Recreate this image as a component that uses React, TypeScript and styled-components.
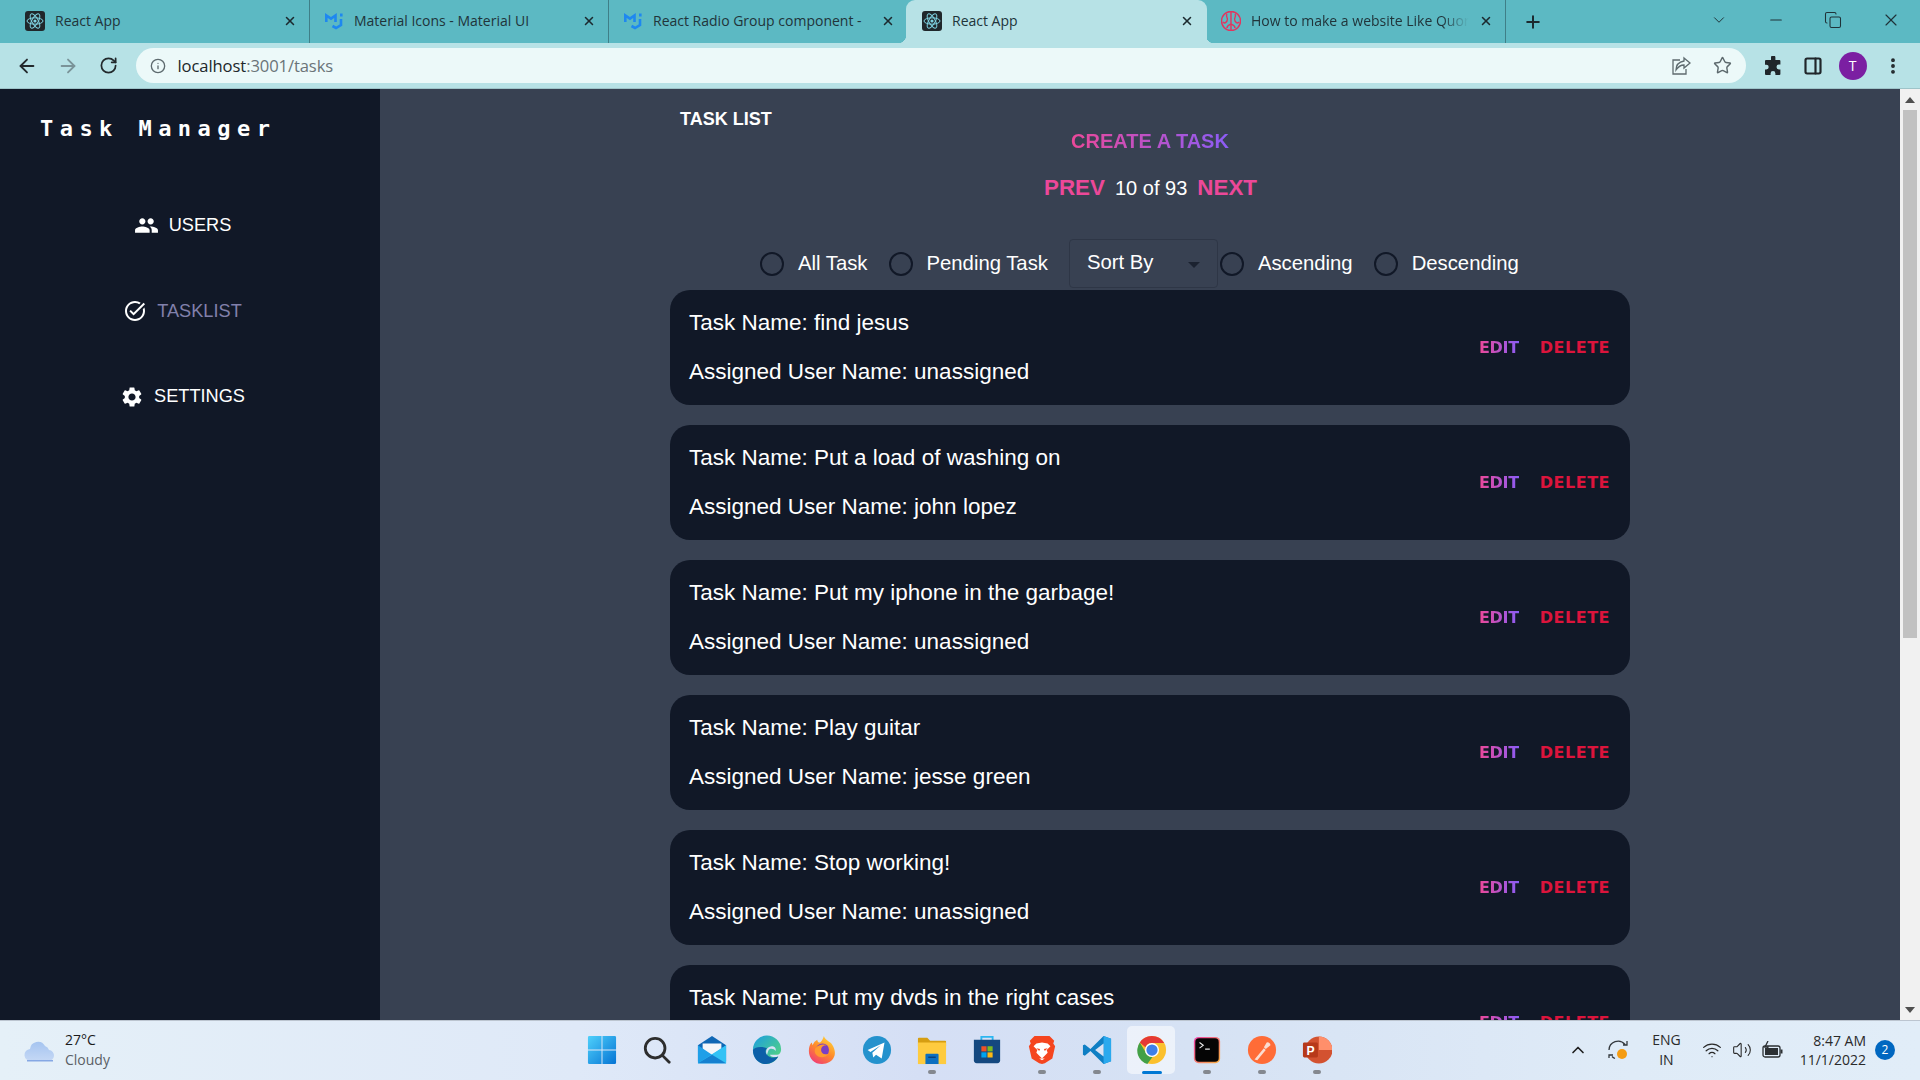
import styled, { createGlobalStyle } from 'styled-components';
import { MdPeople, MdSettings, MdTaskAlt } from 'react-icons/md';
import {
  ArrowLeft,
  ArrowRight,
  ChevronDown,
  ChevronUp,
  Copy,
  EllipsisVertical,
  Info,
  Minus,
  PanelRight,
  Plus,
  RotateCw,
  Star,
  Volume2,
  Wifi,
  X,
} from 'lucide-react';

const GlobalStyle = createGlobalStyle`
  html, body, #root {
    margin: 0;
    height: 100%;
  }

  body {
    overflow: hidden;
    font-family: "Liberation Sans", Arial, sans-serif;
  }

  * {
    box-sizing: border-box;
  }
`;

const Screen = styled.div`
  display: flex;
  flex-direction: column;
  width: 1920px;
  height: 1080px;
`;

/* browser chrome */

const TabStrip = styled.div`
  display: flex;
  align-items: stretch;
  flex: 0 0 43px;
  padding-left: 11px;
  background-color: #5cb9c3;
  font-family: "Open Sans", sans-serif;
  font-size: 14px;
`;

const Tab = styled.div<{ $active?: boolean; $plain?: boolean }>`
  position: relative;
  display: flex;
  align-items: center;
  width: ${({ $active }) => ($active ? '301px' : '299px')};
  margin-left: ${({ $active }) => ($active ? '-2px' : '0')};
  padding: 0 12px 2px ${({ $active }) => ($active ? '16px' : '14px')};
  color: #21343a;
  background-color: ${({ $active }) => ($active ? '#b7e2e6' : 'transparent')};
  border-radius: ${({ $active }) => ($active ? '9px 9px 0 0' : '0')};
  border-right: 1px solid ${({ $active, $plain }) => ($active || $plain ? 'transparent' : '#3f7f88')};

  ${({ $active }) =>
    $active
      ? `
    &::before, &::after {
      content: '';
      position: absolute;
      bottom: 0;
      width: 8px;
      height: 8px;
    }
    &::before {
      left: -8px;
      background: radial-gradient(circle at 0 0, transparent 8px, #b7e2e6 8.5px);
    }
    &::after {
      right: -8px;
      background: radial-gradient(circle at 100% 0, transparent 8px, #b7e2e6 8.5px);
    }
  `
      : ''}
`;

const Favicon = styled.svg`
  flex: 0 0 20px;
  width: 20px;
  height: 20px;
`;

const TabTitle = styled.span<{ $fade?: boolean }>`
  flex: 1;
  margin-left: 10px;
  overflow: hidden;
  white-space: nowrap;
  ${({ $fade }) =>
    $fade ? 'mask-image: linear-gradient(to right, #000 86%, transparent 98%);' : ''}
`;

const TabClose = styled(X)`
  flex: 0 0 14px;
  margin-left: 6px;
  color: #1c2a2f;
`;

const NewTab = styled(Plus)`
  margin: 12px 0 0 17px;
  color: #1c2a2f;
`;

const WindowButtons = styled.div`
  display: flex;
  align-items: center;
  margin-left: auto;
  padding: 0 19px 4px 0;
  gap: 39px;
  color: #1f3238;
`;

const Toolbar = styled.div`
  display: flex;
  align-items: center;
  flex: 0 0 46px;
  padding: 0 0 0 15px;
  background-color: #b7e2e6;
  border-bottom: 1px solid #9ec4c9;
`;

const NavButton = styled.span<{ $muted?: boolean }>`
  display: flex;
  justify-content: center;
  width: 24px;
  margin-right: 16.5px;
  color: ${({ $muted }) => ($muted ? '#7a9398' : '#22292c')};
`;

const AddressBar = styled.div`
  display: flex;
  align-items: center;
  width: 1610px;
  height: 35px;
  margin-left: -1px;
  padding: 0 14px 0 14px;
  border-radius: 18px;
  background-color: #ecf9f9;
  color: #5d6a6e;
`;

const Url = styled.span`
  margin-left: 12px;
  font-family: "Open Sans", sans-serif;
  font-size: 16.6px;
  letter-spacing: -0.1px;
  color: #6a7478;

  b {
    font-weight: 400;
    color: #20272a;
  }
`;

const BarIcons = styled.div`
  display: flex;
  align-items: center;
  gap: 22px;
  margin-left: auto;
`;

const ToolIcons = styled.div`
  display: flex;
  align-items: center;
  gap: 16px;
  margin-left: 17px;
  color: #20262a;
`;

const PanelIcon = styled(PanelRight)`
  margin-left: 4px;
`;

const Avatar = styled.span`
  display: flex;
  align-items: center;
  justify-content: center;
  width: 28px;
  height: 28px;
  border-radius: 50%;
  background-color: #7b1fa2;
  color: #fff;
  font-family: "Open Sans", sans-serif;
  font-size: 14px;
`;

/* page */

const Viewport = styled.div`
  display: flex;
  flex: 1;
  min-height: 0;
`;

const Sidebar = styled.aside`
  display: flex;
  flex-direction: column;
  flex: 0 0 380px;
  padding-top: 26px;
  background-color: #111827;
  color: #fff;
`;

const Brand = styled.h1`
  margin: 0 0 0 40px;
  font-family: "DejaVu Sans Mono", monospace;
  font-size: 22px;
  line-height: 28px;
  font-weight: 700;
  letter-spacing: 6.45px;
  white-space: nowrap;
`;

const SideNav = styled.nav`
  display: flex;
  flex-direction: column;
  align-items: center;
  gap: 64.5px;
  width: 365px;
  margin-top: 72px;
`;

const SideLink = styled.a<{ $current?: boolean }>`
  display: flex;
  align-items: center;
  gap: 10px;
  height: 21px;
  font-size: 18.2px;
  color: ${({ $current }) => ($current ? '#8180ab' : '#fff')};

  svg {
    color: #fff;
  }
`;

const Main = styled.main`
  flex: 1;
  min-width: 0;
  overflow: hidden;
  padding: 19px 0 0 290px;
  background-color: #384152;
`;

const Column = styled.div`
  display: flex;
  flex-direction: column;
  width: 960px;
`;

const PageTitle = styled.h2`
  margin: 0 0 0 10px;
  font-size: 18px;
  line-height: 22px;
  font-weight: 700;
  color: #fff;
`;

const GradientText = styled.span`
  background: linear-gradient(to right, #ec4899, #8b5cf6);
  background-clip: text;
  -webkit-background-clip: text;
  color: transparent;
`;

const CreateLink = styled(GradientText)`
  align-self: center;
  font-size: 20px;
  line-height: 22px;
  font-weight: 700;
`;

const Pager = styled.div`
  display: flex;
  align-items: center;
  justify-content: center;
  gap: 10px;
  height: 28px;
  margin-top: 22px;
  padding-left: 1px;
  font-size: 20px;
  color: #fff;
`;

const PagerLink = styled.a`
  font-size: 22.4px;
  font-weight: 700;
  color: #ec4899;
`;

const Filters = styled.div`
  display: flex;
  align-items: center;
  height: 49px;
  margin-top: 37px;
  padding-left: 90px;
  font-size: 20.3px;
  color: #fff;
`;

const Option = styled.label`
  display: flex;
  align-items: center;
  gap: 14px;
  margin-right: 21px;
  white-space: nowrap;
`;

const Radio = styled.span`
  width: 24px;
  height: 24px;
  border: 2.5px solid #111827;
  border-radius: 50%;
`;

const SortSelect = styled.div`
  position: relative;
  display: flex;
  align-items: center;
  width: 149px;
  height: 49px;
  margin: 0 2px 0 0;
  padding: 0 0 3px 17px;
  border: 1px solid #2e3646;
  border-radius: 4px;

  &::after {
    content: '';
    position: absolute;
    top: 22px;
    right: 17px;
    border: 6px solid transparent;
    border-top-color: #1b2230;
    border-bottom-width: 0;
  }
`;

const TaskList = styled.div`
  display: flex;
  flex-direction: column;
  gap: 20px;
  margin-top: 2px;
`;

const TaskCard = styled.article`
  display: flex;
  align-items: center;
  justify-content: space-between;
  flex: 0 0 115px;
  padding: 0 20px 0 19px;
  border-radius: 20px;
  background-color: #111827;
`;

const TaskLines = styled.div`
  display: flex;
  flex-direction: column;
  gap: 24px;
  margin-top: -2px;
  font-size: 22.5px;
  line-height: 25px;
  color: #fff;
`;

const TaskActions = styled.div`
  display: flex;
  gap: 21px;
  font-family: "DejaVu Sans", sans-serif;
  font-size: 16px;
  font-weight: 700;
`;

const EditLink = styled(GradientText)`
  letter-spacing: -0.3px;
`;

const DeleteLink = styled.a`
  letter-spacing: 0.5px;
  color: #dc143c;
`;

const Scrollbar = styled.div`
  display: flex;
  flex-direction: column;
  align-items: center;
  flex: 0 0 20px;
  padding: 0 3px;
  background-color: #f1f1f1;
`;

const ScrollArrow = styled.span<{ $down?: boolean }>`
  width: 0;
  height: 0;
  margin: ${({ $down }) => ($down ? 'auto 0 7px' : '8px 0 0')};
  border-left: 5px solid transparent;
  border-right: 5px solid transparent;
  border-${({ $down }) => ($down ? 'top' : 'bottom')}: 6px solid #505050;
`;

const ScrollThumb = styled.div`
  width: 14px;
  height: 528px;
  margin-top: 7px;
  background-color: #c1c1c1;
`;

/* taskbar */

const Taskbar = styled.footer`
  display: grid;
  grid-template-columns: 574px auto 1fr;
  align-items: center;
  flex: 0 0 60px;
  padding-bottom: 2px;
  border-top: 1px solid #bcc5d0;
  background: linear-gradient(to right, #e5f0f8 0%, #dfe9f8 30%, #d5dff5 48%, #d6e2f4 62%, #dfebf7 85%, #e1edf8 100%);
  font-family: "Open Sans", sans-serif;
  color: #1b1b1b;
`;

const Weather = styled.div`
  display: flex;
  align-items: center;
  gap: 9px;
  padding-left: 24px;
  font-size: 14px;
  line-height: 20px;
`;

const Muted = styled.div`
  color: #5b5f66;
`;

const AppStrip = styled.div`
  display: flex;
`;

const AppCell = styled.div<{ $active?: boolean }>`
  position: relative;
  display: flex;
  align-items: center;
  justify-content: center;
  width: 55px;
  height: 48px;

  &::before {
    content: '';
    position: absolute;
    left: 3px;
    right: 4px;
    top: 0;
    bottom: 0;
    border-radius: 5px;
    background-color: ${({ $active }) => ($active ? 'rgba(255,255,255,0.55)' : 'transparent')};
  }

  svg {
    position: relative;
    width: 30px;
    height: 30px;
  }
`;

const RunDot = styled.span<{ $active?: boolean }>`
  position: absolute;
  left: 50%;
  bottom: 0;
  width: ${({ $active }) => ($active ? '20px' : '8px')};
  height: ${({ $active }) => ($active ? '3px' : '4px')};
  transform: translateX(-50%);
  border-radius: 2px;
  background-color: ${({ $active }) => ($active ? '#0078d4' : '#84888f')};
`;

const Tray = styled.div`
  display: flex;
  align-items: center;
  justify-content: flex-end;
  padding-right: 25px;
  font-size: 14px;
  color: #2a2a2a;
`;

const TrayArrow = styled(ChevronUp)`
  margin-right: 18px;
  color: #1f1f1f;
`;

const Lang = styled.div`
  margin: 0 21px 0 22px;
  line-height: 20px;
  text-align: center;
`;

const TrayIcons = styled.div`
  display: flex;
  align-items: center;
  gap: 10px;
`;

const Clock = styled.div`
  margin: 0 9px 0 16px;
  line-height: 19px;
  text-align: right;
`;

const Badge = styled.span`
  display: flex;
  align-items: center;
  justify-content: center;
  width: 20px;
  height: 20px;
  border-radius: 50%;
  background-color: #0067c0;
  color: #fff;
  font-size: 12px;
`;

const ReactMark = () => (
  <Favicon viewBox="0 0 20 20">
    <rect width="20" height="20" rx="3" fill="#20272b" />
    <g fill="none" stroke="#7fd3e2" strokeWidth="1">
      <ellipse cx="10" cy="10" rx="8" ry="3.2" />
      <ellipse cx="10" cy="10" rx="8" ry="3.2" transform="rotate(60 10 10)" />
      <ellipse cx="10" cy="10" rx="8" ry="3.2" transform="rotate(120 10 10)" />
    </g>
    <circle cx="10" cy="10" r="1.6" fill="#7fd3e2" />
  </Favicon>
);

const MuiMark = () => (
  <Favicon viewBox="0 0 20 20" fill="none" stroke="#1e88f0" strokeWidth="2.6">
    <path d="M2.300 11V4.500L7 7.600l4.500-3.100V11" />
    <path d="M8.500 15l3.500 2 5-3V8" />
    <path d="M17.300 2.500v3" />
  </Favicon>
);

const BrainMark = () => (
  <Favicon viewBox="0 0 20 20">
    <circle cx="10" cy="10" r="9.500" fill="none" stroke="#e2345e" strokeWidth="1.500" />
    <path
      d="M10 1v18M6 3c-2 3 2 4 0 7s-3 2-4 1M14 3c2 3-2 4 0 7s3 2 4 1M6 17c0-3 2-3 4-4M14 17c0-3-2-3-4-4"
      fill="none"
      stroke="#e2345e"
      strokeWidth="1.400"
    />
  </Favicon>
);

const WindowsIcon = () => (
  <svg viewBox="0 0 32 32">
    <defs>
      <linearGradient id="win" x1="0" y1="0" x2="1" y2="1">
        <stop offset="0" stopColor="#4fd0fb" />
        <stop offset="1" stopColor="#0574d4" />
      </linearGradient>
    </defs>
    <path d="M1 2.500A1.500 1.500 0 012.500 1H15.500V15.500H1zM16.500 1H29.500A1.500 1.500 0 0131 2.500V15.500H16.500zM1 16.500H15.500V31H2.500A1.500 1.500 0 011 29.500zM16.500 16.500H31V29.500A1.500 1.500 0 0129.500 31H16.500z" fill="url(#win)" />
  </svg>
);

const SearchIcon = () => (
  <svg viewBox="0 0 32 32" fill="none" stroke="#2d2d2d" strokeWidth="3" strokeLinecap="round">
    <circle cx="14" cy="14" r="10.500" />
    <path d="M22 22l7 7" />
  </svg>
);

const MailIcon = () => (
  <svg viewBox="0 0 32 32">
    <path d="M1 11L16 1l15 10v17H1z" fill="#0f67b5" />
    <path d="M6 9h20v8l-10 6-10-6z" fill="#f3f6fa" />
    <path d="M1 11l15 10 15-10v19H1z" fill="#1f9fe8" />
    <path d="M31 11v19H1z" fill="#33c2f5" />
    <path d="M1 30l15-9 15 9z" fill="#1580d0" />
  </svg>
);

const EdgeIcon = () => (
  <svg viewBox="0 0 32 32">
    <defs>
      <linearGradient id="edgeTop" x1="0" y1="0" x2="1" y2="1">
        <stop offset="0" stopColor="#1b9de2" />
        <stop offset="1" stopColor="#5bdc72" />
      </linearGradient>
    </defs>
    <path d="M1 16A15 15 0 0131 15c0 3-1 6-4 6h-8c2 3 6 3 9 2-3 6-9 8-13 8C7 31 1 24 1 16z" fill="url(#edgeTop)" />
    <path d="M1 16C1 26 8 31 15 31c5 0 10-3 13-8-5 2-10 1-12-2-2-2-2-5 0-7-5-2-13-2-15 2z" fill="#0c5fa8" />
    <path d="M16 21c-2-3-1-8 5-9 4 0 5 3 4 5-1-2-4-3-6-2-2 1-2 4-3 6z" fill="#d8e1f5" />
  </svg>
);

const FirefoxIcon = () => (
  <svg viewBox="0 0 32 32">
    <defs>
      <linearGradient id="fox" x1="0.800" y1="0" x2="0.200" y2="1">
        <stop offset="0" stopColor="#ffd83a" />
        <stop offset="0.500" stopColor="#ff8a2a" />
        <stop offset="1" stopColor="#f0387a" />
      </linearGradient>
    </defs>
    <path d="M18 1c1 4 5 5 8 8 3 4 5 10 3 14-2 5-7 8-13 8C8 31 2 25 2 17c0-4 1-7 3-9l1 3c1-3 3-5 5-6 0 2 1 3 3 3 2-2 3-4 4-7z" fill="url(#fox)" />
    <circle cx="16.500" cy="16" r="7" fill="#7b3fc4" />
    <path d="M9 14c3-4 9-5 12-3-4 0-6 2-6 5s3 6 8 4c-3 5-11 5-14 0-1-2-1-4 0-6z" fill="#ff9a2e" />
  </svg>
);

const TelegramIcon = () => (
  <svg viewBox="0 0 32 32">
    <circle cx="16" cy="16" r="15" fill="#2492cd" />
    <path d="M6 16l18-8-3 17-6-4-3 3-1-5 9-8-11 7z" fill="#fff" />
  </svg>
);

const FilesIcon = () => (
  <svg viewBox="0 0 32 32">
    <path d="M1 4a1 1 0 011-1h9l3 3h16a1 1 0 011 1v5H1z" fill="#d69e12" />
    <path d="M1 8h30v23H1z" fill="#fecb3f" />
    <path d="M9 21a1 1 0 011-1h12a1 1 0 011 1v10H9z" fill="#0c6fc1" />
    <path d="M12 23h8v1.500h-8z" fill="#0a3f78" />
  </svg>
);

const StoreIcon = () => (
  <svg viewBox="0 0 32 32">
    <path d="M10 6V2h12v4" fill="none" stroke="#2db6f0" strokeWidth="2" />
    <path d="M2 5h28v22a3 3 0 01-3 3H5a3 3 0 01-3-3z" fill="#14487f" />
    <path d="M10 12h5.500v5.500H10z" fill="#f05225" />
    <path d="M16.500 12H22v5.500h-5.500z" fill="#7dba1f" />
    <path d="M10 18.500h5.500V24H10z" fill="#00a4ef" />
    <path d="M16.500 18.500H22V24h-5.500z" fill="#fdb813" />
  </svg>
);

const BraveIcon = () => (
  <svg viewBox="0 0 32 32">
    <path d="M8 1h16l5 5-1 3 2 3-3 13-8 5-3 1-3-1-8-5-3-13 2-3-1-3z" fill="#f5451f" />
    <path d="M10 9l6-1 6 1 3 3-4 4 1 3-6 6-6-6 1-3-4-4zM13 25h6l-3 2z" fill="#fff" />
    <path d="M10 14l4 1-1 2zM22 14l-4 1 1 2z" fill="#f5451f" />
  </svg>
);

const VsCodeIcon = () => (
  <svg viewBox="0 0 32 32">
    <path d="M23 1L9 15 3 10 1 11v10l2 1 6-5 14 14 8-3V4z" fill="#0f7fc4" />
    <path d="M23 1l8 3v24l-8 3z" fill="#2aa9ee" />
    <path d="M23 9v14l-9-7z" fill="#d9e3f5" />
  </svg>
);

const ChromeIcon = () => (
  <svg viewBox="0 0 32 32">
    <circle cx="16" cy="16" r="15" fill="#fbc02d" />
    <path d="M16 1a15 15 0 0113 7.500H16a7.500 7.500 0 00-7 4.500L3 8a15 15 0 0113-7z" fill="#e53935" />
    <path d="M3 8l6.500 11a7.500 7.500 0 007 4.500L11 31A15 15 0 013 8z" fill="#43a047" />
    <circle cx="16" cy="16" r="7.500" fill="#fff" />
    <circle cx="16" cy="16" r="6" fill="#3f7fe8" />
  </svg>
);

const TerminalIcon = () => (
  <svg viewBox="0 0 32 32">
    <defs>
      <linearGradient id="term" x1="0" y1="0" x2="1" y2="1">
        <stop offset="0" stopColor="#f040a8" />
        <stop offset="1" stopColor="#f8b040" />
      </linearGradient>
    </defs>
    <rect x="2" y="2" width="28" height="28" rx="5" fill="url(#term)" />
    <rect x="3.500" y="3.500" width="25" height="25" rx="4" fill="#050505" />
    <path d="M8 8l4 3-4 3M14 15h5" fill="none" stroke="#e8e8e8" strokeWidth="1.200" />
  </svg>
);

const PostmanIcon = () => (
  <svg viewBox="0 0 32 32">
    <circle cx="16" cy="16" r="15" fill="#ff6c37" />
    <path d="M8 26l10-12 2 2L11 27zM18 13l3-5a3 3 0 014 3l-5 4z" fill="#fbdcd0" />
  </svg>
);

const PowerPointIcon = () => (
  <svg viewBox="0 0 32 32">
    <circle cx="18" cy="16" r="14.500" fill="#d35230" />
    <path d="M18 1.500A14.500 14.500 0 0132.500 16H18z" fill="#ff8f6b" />
    <rect x="1" y="8" width="16" height="16" rx="1.500" fill="#b7391a" />
    <text x="9" y="21" textAnchor="middle" fontFamily="'Liberation Sans', sans-serif" fontWeight="700" fontSize="13" fill="#fff">
      P
    </text>
  </svg>
);

const CloudIcon = () => (
  <svg width="32" height="24" viewBox="0 0 32 24">
    <defs>
      <linearGradient id="cloud" x1="0" y1="0" x2="0" y2="1">
        <stop offset="0" stopColor="#a5c4f0" />
        <stop offset="1" stopColor="#c5d8f5" />
      </linearGradient>
    </defs>
    <path d="M7 23a6 6 0 01-1-12 8 8 0 0115-3 6 6 0 014 4 5.500 5.500 0 01-1 11z" fill="url(#cloud)" />
    <path d="M3 22h26v1.500H3z" fill="#86a8e4" />
  </svg>
);

const ShareIcon = () => (
  <svg width="20" height="20" viewBox="0 0 20 20" fill="none" stroke="#5d6a6e" strokeWidth="1.300">
    <path d="M9 4H2v14h13v-5" />
    <path d="M13 2l6 5-6 5V9c-4 0-6 2-8 5 0-5 3-8 8-9z" />
  </svg>
);

const PuzzleIcon = () => (
  <svg width="20" height="20" viewBox="0 0 20 20" fill="#20262a">
    <path d="M8 1.500a2.200 2.200 0 014.400 0V4h4a1 1 0 011 1v3.600h-1.500a2.400 2.400 0 000 4.800h1.500V18a1 1 0 01-1 1h-4v-1.500a2.400 2.400 0 00-4.800 0V19H3a1 1 0 01-1-1v-4.500h1.300a2.400 2.400 0 000-4.800H2V5a1 1 0 011-1h5z" />
  </svg>
);

const SyncIcon = () => (
  <svg width="24" height="24" viewBox="0 0 24 24" fill="none" stroke="#33383d" strokeWidth="1.300">
    <path d="M3 12a9 9 0 0116-5.500M21 3v4h-4M6 18.500a9 9 0 003 2M3 20v-3h4" />
    <circle cx="16" cy="16" r="5" fill="#f59c12" stroke="none" />
  </svg>
);

const BatteryIcon = () => (
  <svg width="22" height="18" viewBox="0 0 22 18" fill="none" stroke="#2c3033" strokeWidth="1.300">
    <rect x="1" y="5" width="17" height="11" rx="2" />
    <path d="M19.500 8.500v4" strokeWidth="2" />
    <path d="M3 7h13v7H3z" fill="#2c3033" stroke="none" />
    <path d="M6 0L3 6h3l-1 4" stroke="#2c3033" />
  </svg>
);

const tasks = [
  { name: 'find jesus', user: 'unassigned' },
  { name: 'Put a load of washing on', user: 'john lopez' },
  { name: 'Put my iphone in the garbage!', user: 'unassigned' },
  { name: 'Play guitar', user: 'jesse green' },
  { name: 'Stop working!', user: 'unassigned' },
  { name: 'Put my dvds in the right cases', user: 'unassigned' },
];

const apps = [
  { key: 'windows', icon: <WindowsIcon /> },
  { key: 'search', icon: <SearchIcon /> },
  { key: 'mail', icon: <MailIcon /> },
  { key: 'edge', icon: <EdgeIcon /> },
  { key: 'firefox', icon: <FirefoxIcon /> },
  { key: 'telegram', icon: <TelegramIcon /> },
  { key: 'files', icon: <FilesIcon />, running: true },
  { key: 'store', icon: <StoreIcon /> },
  { key: 'brave', icon: <BraveIcon />, running: true },
  { key: 'vscode', icon: <VsCodeIcon />, running: true },
  { key: 'chrome', icon: <ChromeIcon />, active: true },
  { key: 'terminal', icon: <TerminalIcon />, running: true },
  { key: 'postman', icon: <PostmanIcon />, running: true },
  { key: 'powerpoint', icon: <PowerPointIcon />, running: true },
];

const App = () => {
  return (
    <Screen>
      <GlobalStyle />
      <TabStrip>
        <Tab>
          <ReactMark />
          <TabTitle>React App</TabTitle>
          <TabClose size={16} strokeWidth={2.6} />
        </Tab>
        <Tab>
          <MuiMark />
          <TabTitle>Material Icons - Material UI</TabTitle>
          <TabClose size={16} strokeWidth={2.6} />
        </Tab>
        <Tab $plain>
          <MuiMark />
          <TabTitle>React Radio Group component - </TabTitle>
          <TabClose size={16} strokeWidth={2.6} />
        </Tab>
        <Tab $active>
          <ReactMark />
          <TabTitle>React App</TabTitle>
          <TabClose size={16} strokeWidth={2.6} />
        </Tab>
        <Tab>
          <BrainMark />
          <TabTitle $fade>How to make a website Like Quora</TabTitle>
          <TabClose size={16} strokeWidth={2.6} />
        </Tab>
        <NewTab size={20} strokeWidth={2.4} />
        <WindowButtons>
          <ChevronDown size={18} strokeWidth={1.300} />
          <Minus size={18} strokeWidth={1.500} />
          <Copy size={18} strokeWidth={1.400} />
          <X size={20} strokeWidth={1.400} />
        </WindowButtons>
      </TabStrip>

      <Toolbar>
        <NavButton>
          <ArrowLeft size={22} strokeWidth={2} />
        </NavButton>
        <NavButton $muted>
          <ArrowRight size={22} strokeWidth={2} />
        </NavButton>
        <NavButton>
          <RotateCw size={19} strokeWidth={2.2} />
        </NavButton>
        <AddressBar>
          <Info size={16} strokeWidth={2} />
          <Url>
            <b>localhost</b>:3001/tasks
          </Url>
          <BarIcons>
            <ShareIcon />
            <Star size={19} strokeWidth={1.800} />
          </BarIcons>
        </AddressBar>
        <ToolIcons>
          <PuzzleIcon />
          <PanelIcon size={20} strokeWidth={2.6} />
          <Avatar>T</Avatar>
          <EllipsisVertical size={20} strokeWidth={2.6} />
        </ToolIcons>
      </Toolbar>

      <Viewport>
        <Sidebar>
          <Brand>Task Manager</Brand>
          <SideNav>
            <SideLink>
              <MdPeople size={25} />
              USERS
            </SideLink>
            <SideLink $current>
              <MdTaskAlt size={24} />
              TASKLIST
            </SideLink>
            <SideLink>
              <MdSettings size={24} />
              SETTINGS
            </SideLink>
          </SideNav>
        </Sidebar>

        <Main>
          <Column>
            <PageTitle>TASK LIST</PageTitle>
            <CreateLink>CREATE A TASK</CreateLink>
            <Pager>
              <PagerLink>PREV</PagerLink>
              <span>10 of 93</span>
              <PagerLink>NEXT</PagerLink>
            </Pager>
            <Filters>
              <Option>
                <Radio />
                All Task
              </Option>
              <Option>
                <Radio />
                Pending Task
              </Option>
              <SortSelect>Sort By</SortSelect>
              <Option>
                <Radio />
                Ascending
              </Option>
              <Option>
                <Radio />
                Descending
              </Option>
            </Filters>
            <TaskList>
              {tasks.map((task) => (
                <TaskCard key={task.name}>
                  <TaskLines>
                    <span>Task Name: {task.name}</span>
                    <span>Assigned User Name: {task.user}</span>
                  </TaskLines>
                  <TaskActions>
                    <EditLink>EDIT</EditLink>
                    <DeleteLink>DELETE</DeleteLink>
                  </TaskActions>
                </TaskCard>
              ))}
            </TaskList>
          </Column>
        </Main>

        <Scrollbar>
          <ScrollArrow />
          <ScrollThumb />
          <ScrollArrow $down />
        </Scrollbar>
      </Viewport>

      <Taskbar>
        <Weather>
          <CloudIcon />
          <div>
            <div>27°C</div>
            <Muted>Cloudy</Muted>
          </div>
        </Weather>
        <AppStrip>
          {apps.map((app) => (
            <AppCell key={app.key} $active={app.active}>
              {app.icon}
              {app.running ? <RunDot /> : null}
              {app.active ? <RunDot $active /> : null}
            </AppCell>
          ))}
        </AppStrip>
        <Tray>
          <TrayArrow size={20} strokeWidth={2} />
          <SyncIcon />
          <Lang>
            ENG
            <br />
            IN
          </Lang>
          <TrayIcons>
            <Wifi size={20} strokeWidth={1.500} />
            <Volume2 size={20} strokeWidth={1.300} />
            <BatteryIcon />
          </TrayIcons>
          <Clock>
            8:47 AM
            <br />
            11/1/2022
          </Clock>
          <Badge>2</Badge>
        </Tray>
      </Taskbar>
    </Screen>
  );
};

export default App;
